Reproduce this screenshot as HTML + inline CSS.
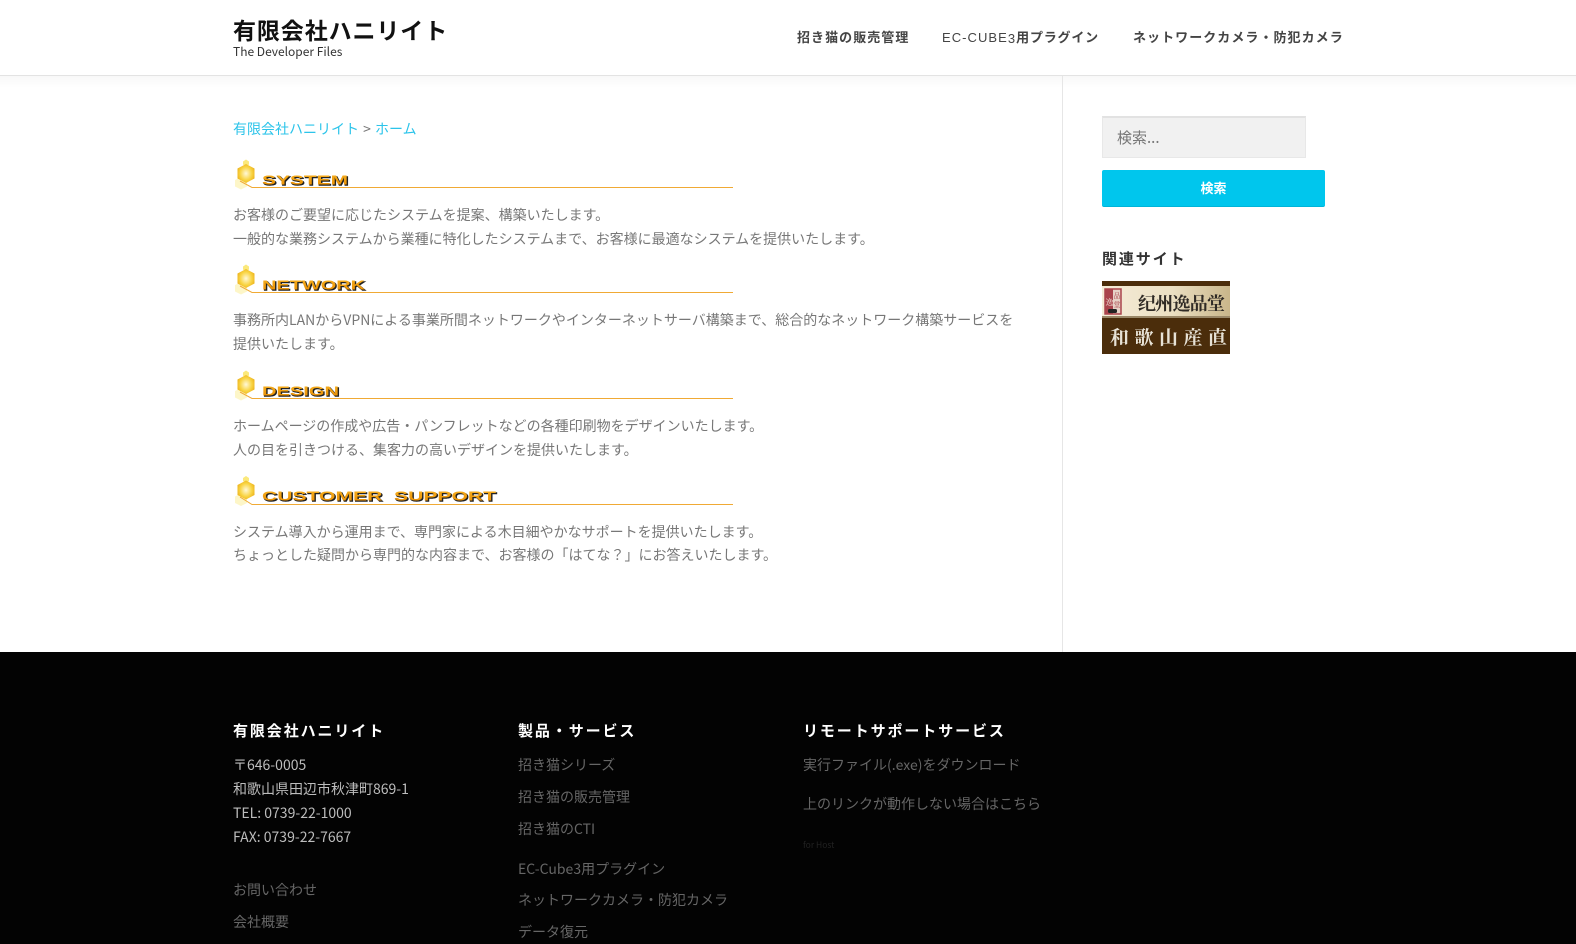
<!DOCTYPE html>
<html lang="ja"><head><meta charset="utf-8"><title>有限会社ハニリイト</title>
<style>
html,body{margin:0;padding:0;background:#fff}
body{position:relative;width:1576px;height:944px;overflow:hidden;font-family:"Noto Sans CJK JP","Liberation Sans",sans-serif;font-size:14px;color:#777}
.t{position:absolute;line-height:24px;white-space:nowrap}
a{color:inherit;text-decoration:none}
#hd{position:absolute;left:0;top:0;width:1576px;height:75px;border-bottom:1px solid #e3e3e3;box-sizing:content-box}
#sh{position:absolute;left:0;top:76px;width:1576px;height:12px;background:linear-gradient(#f8f8f8,#fff)}
#vl{position:absolute;left:1062px;top:76px;width:1px;height:576px;background:#e6e6e6}
.nav{font-family:"Liberation Sans","Noto Sans CJK JP",sans-serif;font-size:13px;font-weight:700;letter-spacing:1.05px;color:#444}
#ft{position:absolute;left:0;top:652px;width:1576px;height:292px;background:#030303}
.h{font-weight:700;color:#fff;letter-spacing:1.9px;font-size:15px}
.w{color:#bdbdbd}
.g{color:#666}
svg{position:absolute;overflow:visible}
</style></head><body>
<svg width="0" height="0" style="position:absolute"><defs>
<radialGradient id="hx" cx=".5" cy=".5" r=".62"><stop offset="0" stop-color="#fff8d8"/><stop offset=".55" stop-color="#f9d545"/><stop offset="1" stop-color="#e9a80f"/></radialGradient>
<linearGradient id="or" x1="0" y1="0" x2="0" y2="1"><stop offset="0" stop-color="#f6b020"/><stop offset="1" stop-color="#e88a00"/></linearGradient>
<g id="hex">
<polygon points="-9,7.5 -3,4.5 3,7.5 3,14 -3,17 -9,14" transform="translate(-2,-1)" fill="#fdf6c8"/>
<polygon points="0,-14 3,-12 3,-9 0,-7 -3,-9 -3,-12" fill="#fbe97c"/>
<polygon points="0,-9.500 8.500,-5 8.500,5 0,9.500 -8.500,5 -8.500,-5" fill="url(#hx)"/>
</g>
</defs></svg>

<div id="hd"></div><div id="sh"></div><div id="vl"></div>
<div class="t" style="left:233px;top:13px;line-height:32px;font-size:23px;font-weight:700;letter-spacing:.9px;color:#111">有限会社ハニリイト</div>
<div class="t" style="left:233px;top:40px;font-size:12px;color:#333">The Developer Files</div>
<div class="t nav" style="left:797px;top:26px">招き猫の販売管理</div>
<div class="t nav" style="left:942px;top:26px;font-weight:400">EC-CUBE<span style="position:relative;top:1px">3</span><span style="font-weight:700;letter-spacing:.8px">用プラグイン</span></div>
<div class="t nav" style="left:1133px;top:26px">ネットワークカメラ・防犯カメラ</div>

<div class="t" style="left:233px;top:116.500px;color:#777"><a style="color:#2cc4ea">有限会社ハニリイト</a><span style="margin:0 1px"> &gt; </span><a style="color:#2cc4ea">ホーム</a></div>

<svg style="left:0;top:0" width="1060" height="520">
<g font-family="Liberation Sans" font-weight="700" font-size="12.5">
<use href="#hex" x="246" y="173.500"/><path d="M240 181L252 187.500H733" fill="none" stroke="#f0aa35" stroke-width="1"/>
<text x="263" y="185.500" textLength="86" lengthAdjust="spacingAndGlyphs" fill="#222" stroke="#222" stroke-width=".5">SYSTEM</text>
<text x="262" y="184.500" textLength="86" lengthAdjust="spacingAndGlyphs" fill="url(#or)">SYSTEM</text>
<use href="#hex" x="246" y="278.500"/><path d="M240 286L252 292.500H733" fill="none" stroke="#f0aa35" stroke-width="1"/>
<text x="263" y="290.500" textLength="103" lengthAdjust="spacingAndGlyphs" fill="#222" stroke="#222" stroke-width=".5">NETWORK</text>
<text x="262" y="289.500" textLength="103" lengthAdjust="spacingAndGlyphs" fill="url(#or)">NETWORK</text>
<use href="#hex" x="246" y="384.500"/><path d="M240 392L252 398.500H733" fill="none" stroke="#f0aa35" stroke-width="1"/>
<text x="263" y="396.500" textLength="77" lengthAdjust="spacingAndGlyphs" fill="#222" stroke="#222" stroke-width=".5">DESIGN</text>
<text x="262" y="395.500" textLength="77" lengthAdjust="spacingAndGlyphs" fill="url(#or)">DESIGN</text>
<use href="#hex" x="246" y="490"/><path d="M240 497L252 504.500H733" fill="none" stroke="#f0aa35" stroke-width="1"/>
<text x="263" y="501.500" textLength="234" lengthAdjust="spacingAndGlyphs" fill="#222" stroke="#222" stroke-width=".5" xml:space="preserve">CUSTOMER  SUPPORT</text>
<text x="262" y="500.500" textLength="234" lengthAdjust="spacingAndGlyphs" fill="url(#or)" xml:space="preserve">CUSTOMER  SUPPORT</text>
</g>
</svg>

<div class="t" style="left:233px;top:203px">お客様のご要望に応じたシステムを提案、構築いたします。</div>
<div class="t" style="left:233px;top:227px">一般的な業務システムから業種に特化したシステムまで、お客様に最適なシステムを提供いたします。</div>
<div class="t" style="left:233px;top:308px">事務所内LANからVPNによる事業所間ネットワークやインターネットサーバ構築まで、総合的なネットワーク構築サービスを</div>
<div class="t" style="left:233px;top:332px">提供いたします。</div>
<div class="t" style="left:233px;top:414px">ホームページの作成や広告・パンフレットなどの各種印刷物をデザインいたします。</div>
<div class="t" style="left:233px;top:438px">人の目を引きつける、集客力の高いデザインを提供いたします。</div>
<div class="t" style="left:233px;top:520px">システム導入から運用まで、専門家による木目細やかなサポートを提供いたします。</div>
<div class="t" style="left:233px;top:543px">ちょっとした疑問から専門的な内容まで、お客様の「はてな？」にお答えいたします。</div>

<div style="position:absolute;left:1102px;top:116px;width:204px;height:42px;box-sizing:border-box;background:#f1f1f1;border:1px solid #e8e8e8;border-top:2px solid #e2e2e2"></div>
<div class="t" style="left:1117px;top:126px;color:#777;font-size:15px">検索...</div>
<div style="position:absolute;left:1102px;top:170px;width:223px;height:37px;box-sizing:border-box;background:#00c6ed;border-bottom:1px solid #00b4d8;border-radius:2px"></div>
<div class="t" style="left:1102px;width:223px;text-align:center;top:176px;color:#fff;font-weight:700;font-size:13px">検索</div>
<div class="t" style="left:1102px;top:247px;font-weight:700;font-size:15px;letter-spacing:1.9px;color:#333">関連サイト</div>

<svg style="left:1102px;top:281px" width="128" height="73" viewBox="0 0 128 73">
<defs><linearGradient id="tan" x1="0" x2="1" y1="0" y2="0"><stop offset="0" stop-color="#f5ecd8"/><stop offset=".55" stop-color="#ebdfc2"/><stop offset="1" stop-color="#c9b68a"/></linearGradient></defs>
<rect width="128" height="73" fill="#4b2d0b"/>
<rect y="5" width="128" height="31" fill="url(#tan)"/>
<rect y="35" width="128" height="2" fill="#9a8868"/>
<rect x="3" y="8" width="16" height="25" fill="#e6d2c6" stroke="#a9444c" stroke-width="1.500"/>
<rect x="3" y="8" width="8" height="25" fill="#a9444c"/>
<text x="3.500" y="24" font-family="Noto Serif CJK SC,serif" font-size="8" fill="#f4e8dc">逸</text>
<text x="11.500" y="17" font-family="Noto Serif CJK SC,serif" font-size="7" fill="#a9444c">品</text>
<text x="11.500" y="26" font-family="Noto Serif CJK SC,serif" font-size="7" fill="#a9444c">堂</text>
<rect x="6" y="28" width="9" height="4" rx="1.500" fill="#222"/>
<text x="36" y="29" font-family="Noto Serif CJK SC,serif" font-size="18" font-weight="700" fill="#2f2a25" textLength="87">纪州逸品堂</text>
<text x="8" y="63" font-family="Noto Serif CJK SC,serif" font-size="19" font-weight="700" fill="#e7e2d6" textLength="117">和歌山産直</text>
</svg>

<div id="ft"></div>
<div class="t h" style="left:233px;top:719px">有限会社ハニリイト</div>
<div class="t h" style="left:518px;top:719px">製品・サービス</div>
<div class="t h" style="left:803px;top:719px">リモートサポートサービス</div>
<div class="t w" style="left:233px;top:753px">〒646-0005</div>
<div class="t w" style="left:233px;top:777px">和歌山県田辺市秋津町869-1</div>
<div class="t w" style="left:233px;top:801px">TEL: 0739-22-1000</div>
<div class="t w" style="left:233px;top:825px">FAX: 0739-22-7667</div>
<div class="t g" style="left:233px;top:878px">お問い合わせ</div>
<div class="t g" style="left:233px;top:910px">会社概要</div>
<div class="t g" style="left:518px;top:753px">招き猫シリーズ</div>
<div class="t g" style="left:518px;top:785px">招き猫の販売管理</div>
<div class="t g" style="left:518px;top:817px">招き猫のCTI</div>
<div class="t g" style="left:518px;top:857px">EC-Cube3用プラグイン</div>
<div class="t g" style="left:518px;top:888px">ネットワークカメラ・防犯カメラ</div>
<div class="t g" style="left:518px;top:920px">データ復元</div>
<div class="t g" style="left:803px;top:753px">実行ファイル(.exe)をダウンロード</div>
<div class="t g" style="left:803px;top:792px">上のリンクが動作しない場合はこちら</div>
<div class="t" style="left:803px;top:833px;font-size:8.500px;color:#222">for Host</div>
</body></html>
